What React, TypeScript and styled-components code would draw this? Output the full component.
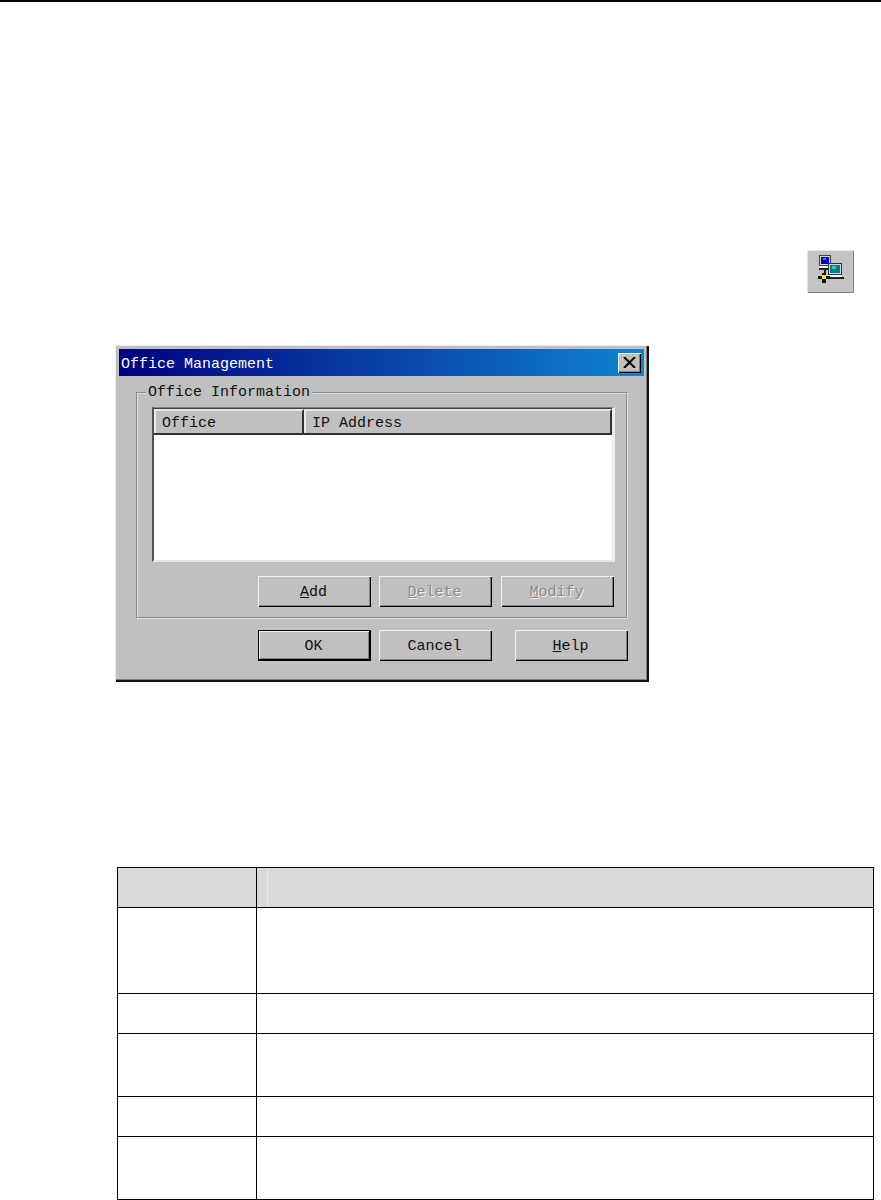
import React from 'react';
import styled, { createGlobalStyle } from 'styled-components';

const GlobalStyle = createGlobalStyle`
  html, body {
    margin: 0;
    padding: 0;
    background: #fff;
  }
`;

const Page = styled.div`
  width: 881px;
  height: 1200px;
  background: #fff;
  overflow: hidden;
  display: flex;
  flex-direction: column;
`;

const TopRule = styled.div`
  height: 2px;
  background: #000;
`;

const ToolRow = styled.div`
  display: flex;
  justify-content: flex-end;
  margin-top: 248px;
  padding-right: 27px;
`;

const ToolButton = styled.div`
  width: 47px;
  height: 43px;
  box-sizing: border-box;
  background: #c3c3c3;
  box-shadow: inset 1px 1px 0 #e6e6e6, inset -1px -1px 0 #808080;
`;

const Dialog = styled.div`
  width: 534px;
  height: 338px;
  box-sizing: border-box;
  margin: 52px 0 0 115px;
  padding: 4px 5px 0 4px;
  background: #c0c0c0;
  box-shadow: inset 1px 1px 0 #ececec, inset -2px -2px 0 #111, inset -3px -3px 0 #808080;
  font-family: "Liberation Mono", monospace;
  font-size: 15px;
  color: #111;
`;

const TitleBar = styled.div`
  height: 27px;
  display: flex;
  align-items: center;
  justify-content: space-between;
  padding: 0 3px 0 2px;
  background: linear-gradient(90deg, #00007f, #1084d0);
  color: #fff;
`;

const TitleText = styled.span`
  padding-top: 3px;
`;

const CloseButton = styled.div`
  width: 23px;
  height: 20px;
  display: flex;
  align-items: center;
  justify-content: center;
  background: #c0c0c0;
  box-shadow: inset 1px 1px 0 #fff, inset -1px -1px 0 #000, inset -2px -2px 0 #808080;
`;

const Group = styled.fieldset`
  width: 492px;
  height: 235px;
  box-sizing: border-box;
  margin: 8px 0 0 17px;
  padding: 0 11px 0 14px;
  border: 2px groove #e0e0e0;
  min-width: 0;
`;

const GroupTitle = styled.legend`
  padding: 0 2px;
  margin-left: -6px;
  line-height: 17px;
`;

const List = styled.div`
  height: 155px;
  box-sizing: border-box;
  margin-top: 6px;
  background: #fff;
  border-top: 1px solid #808080;
  border-left: 2px solid #505050;
  border-right: 3px solid #eeeeee;
  border-bottom: 2px solid #e6e6e6;
`;

const ListHeader = styled.div`
  display: flex;
  height: 27px;
  box-sizing: border-box;
  border-top: 1px solid #404040;
  border-bottom: 2px solid #303030;
`;

const HeaderCell = styled.div<{ $width?: number }>`
  ${(p) => (p.$width ? `width: ${p.$width}px;` : 'flex: 1;')}
  box-sizing: border-box;
  padding: 1px 6px 0;
  line-height: 23px;
  background: #c0c0c0;
  border-top: 2px solid #e8e8e8;
  border-left: 2px solid #e8e8e8;
  border-right: 2px solid #303030;
`;

const ButtonRow = styled.div<{ $top: number; $pad: number }>`
  display: flex;
  justify-content: flex-end;
  margin-top: ${(p) => p.$top}px;
  padding-right: ${(p) => p.$pad}px;
`;

const PushButton = styled.div<{ $left?: number; $disabled?: boolean; $default?: boolean }>`
  width: 113px;
  height: 31px;
  box-sizing: border-box;
  margin-left: ${(p) => p.$left ?? 0}px;
  padding: 2px 2px 0 0;
  display: flex;
  align-items: center;
  justify-content: center;
  background: #c0c0c0;
  box-shadow: ${(p) =>
    p.$default
      ? 'inset 0 0 0 1px #000, inset -2px -2px 0 #000, inset 2px 2px 0 #f0f0f0, inset -3px -3px 0 #808080'
      : 'inset 1px 1px 0 #f0f0f0, inset -1px -1px 0 #000, inset -2px -2px 0 #808080'};
  color: ${(p) => (p.$disabled ? '#8c8c8c' : '#111')};
  text-shadow: ${(p) => (p.$disabled ? '1px 1px 0 #f0f0f0' : 'none')};
`;

const SpecTable = styled.div`
  width: 757px;
  box-sizing: border-box;
  margin: 185px 0 0 117px;
  border: 1px solid #000;
`;

const SpecRow = styled.div<{ $height: number; $head?: boolean }>`
  height: ${(p) => p.$height}px;
  box-sizing: border-box;
  display: grid;
  grid-template-columns: 138px 1fr;
  border-top: ${(p) => (p.$head ? 'none' : '1px solid #000')};
  background: ${(p) => (p.$head ? '#d9d9d9' : '#fff')};
`;

const SpecCell = styled.div`
  & + & {
    border-left: 1px solid #000;
    padding-left: 10px;
  }
`;

const HeadAccent = styled.div`
  height: 100%;
  border-left: 1px solid #e8e8e8;
`;

const NetworkIcon = () => (
  <svg width="47" height="43" viewBox="0 0 47 43">
    <rect x="12" y="5" width="12" height="11" fill="#404040" />
    <rect x="13" y="6" width="10" height="9" fill="#d8d8d8" />
    <rect x="14" y="7" width="8" height="7" fill="#0000c8" />
    <rect x="16" y="8" width="3" height="2" fill="#2090e8" />
    <rect x="12" y="16" width="12" height="2" fill="#f4f4f4" />
    <rect x="12" y="18" width="10" height="2" fill="#202020" />
    <rect x="21" y="13" width="14" height="12" fill="#303030" />
    <rect x="22" y="14" width="12" height="10" fill="#d8d8d8" />
    <rect x="23" y="15" width="10" height="8" fill="#008080" />
    <rect x="25" y="16" width="4" height="3" fill="#20d0c0" />
    <rect x="21" y="25" width="14" height="2" fill="#f4f4f4" />
    <rect x="20" y="27" width="17" height="2" fill="#202020" />
    <rect x="17" y="20" width="2" height="4" fill="#202020" />
    <rect x="11" y="26" width="12" height="3" fill="#101010" />
    <rect x="15" y="23" width="4" height="10" fill="#101010" />
    <rect x="15" y="25" width="4" height="4" fill="#f0e800" />
  </svg>
);

const CloseIcon = () => (
  <svg width="13" height="11" viewBox="0 0 13 11">
    <path d="M1 0 L12 11 M12 0 L1 11" stroke="#000" strokeWidth="2" fill="none" />
  </svg>
);

export default function App() {
  return (
    <Page>
      <GlobalStyle />
      <TopRule />
      <ToolRow>
        <ToolButton>
          <NetworkIcon />
        </ToolButton>
      </ToolRow>
      <Dialog>
        <TitleBar>
          <TitleText>Office Management</TitleText>
          <CloseButton>
            <CloseIcon />
          </CloseButton>
        </TitleBar>
        <Group>
          <GroupTitle>Office Information</GroupTitle>
          <List>
            <ListHeader>
              <HeaderCell $width={150}>Office</HeaderCell>
              <HeaderCell>IP Address</HeaderCell>
            </ListHeader>
          </List>
          <ButtonRow $top={14} $pad={1}>
            <PushButton>
              <span><u>A</u>dd</span>
            </PushButton>
            <PushButton $left={8} $disabled>
              <span><u>D</u>elete</span>
            </PushButton>
            <PushButton $left={9} $disabled>
              <span><u>M</u>odify</span>
            </PushButton>
          </ButtonRow>
        </Group>
        <ButtonRow $top={11} $pad={16}>
          <PushButton $default>OK</PushButton>
          <PushButton $left={8}>Cancel</PushButton>
          <PushButton $left={23}>
            <span><u>H</u>elp</span>
          </PushButton>
        </ButtonRow>
      </Dialog>
      <SpecTable>
        <SpecRow $height={39} $head>
          <SpecCell />
          <SpecCell>
            <HeadAccent />
          </SpecCell>
        </SpecRow>
        <SpecRow $height={86}>
          <SpecCell />
          <SpecCell />
        </SpecRow>
        <SpecRow $height={40}>
          <SpecCell />
          <SpecCell />
        </SpecRow>
        <SpecRow $height={63}>
          <SpecCell />
          <SpecCell />
        </SpecRow>
        <SpecRow $height={40}>
          <SpecCell />
          <SpecCell />
        </SpecRow>
        <SpecRow $height={63}>
          <SpecCell />
          <SpecCell />
        </SpecRow>
      </SpecTable>
    </Page>
  );
}
